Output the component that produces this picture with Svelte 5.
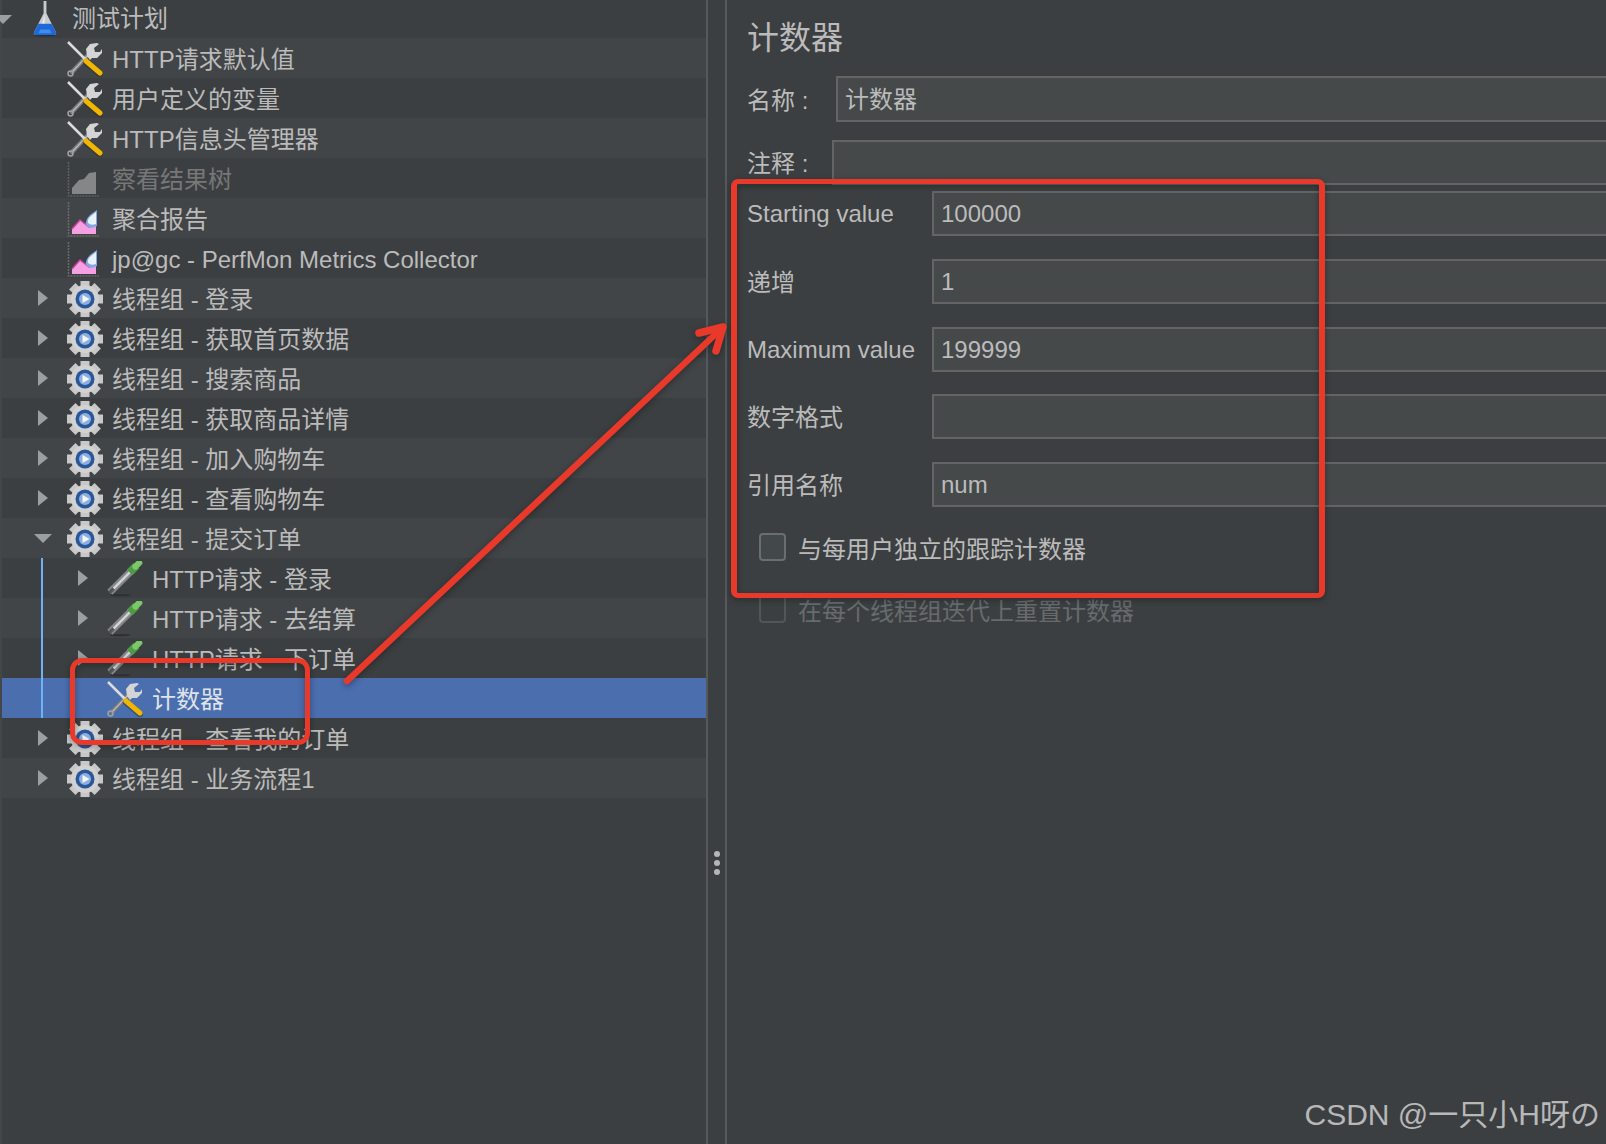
<script>
	const rows = [
		{ label: '测试计划', depth: 0, icon: 'flask', twisty: 'down' },
		{ label: 'HTTP请求默认值', depth: 1, icon: 'tools' },
		{ label: '用户定义的变量', depth: 1, icon: 'tools' },
		{ label: 'HTTP信息头管理器', depth: 1, icon: 'tools' },
		{ label: '察看结果树', depth: 1, icon: 'chart', disabled: true },
		{ label: '聚合报告', depth: 1, icon: 'chart' },
		{ label: 'jp@gc - PerfMon Metrics Collector', depth: 1, icon: 'chart' },
		{ label: '线程组 - 登录', depth: 1, icon: 'gear', twisty: 'right' },
		{ label: '线程组 - 获取首页数据', depth: 1, icon: 'gear', twisty: 'right' },
		{ label: '线程组 - 搜索商品', depth: 1, icon: 'gear', twisty: 'right' },
		{ label: '线程组 - 获取商品详情', depth: 1, icon: 'gear', twisty: 'right' },
		{ label: '线程组 - 加入购物车', depth: 1, icon: 'gear', twisty: 'right' },
		{ label: '线程组 - 查看购物车', depth: 1, icon: 'gear', twisty: 'right' },
		{ label: '线程组 - 提交订单', depth: 1, icon: 'gear', twisty: 'down' },
		{ label: 'HTTP请求 - 登录', depth: 2, icon: 'dropper', twisty: 'right', guide: true },
		{ label: 'HTTP请求 - 去结算', depth: 2, icon: 'dropper', twisty: 'right', guide: true },
		{ label: 'HTTP请求 - 下订单', depth: 2, icon: 'dropper', twisty: 'right', guide: true },
		{ label: '计数器', depth: 2, icon: 'tools', guide: true, selected: true },
		{ label: '线程组 - 查看我的订单', depth: 1, icon: 'gear', twisty: 'right' },
		{ label: '线程组 - 业务流程1', depth: 1, icon: 'gear', twisty: 'right' }
	];

	const fields = [
		{ label: 'Starting value', value: '100000' },
		{ label: '递增', value: '1', cjk: true },
		{ label: 'Maximum value', value: '199999' },
		{ label: '数字格式', value: '', cjk: true },
		{ label: '引用名称', value: 'num', cjk: true }
	];

	const teeth = [0, 45, 90, 135, 180, 225, 270, 315];
</script>

{#snippet icon(name, disabled)}
	{#if name === 'flask'}
		<svg class="icon" viewBox="0 0 36 38">
			<ellipse cx="18" cy="36" rx="12" ry="1.500" fill="#2c2e30" />
			<path d="M16.500 0h3v13l10 20q1 3-2 3H8.500q-3 0-2-3l10-20V5z" fill="#c9ccce" />
			<path d="M18 14l-4 14h3z" fill="#f1f1f1" />
			<path d="M11 24h14l4.500 9q1 3-2 3H8.500q-3 0-2-3z" fill="#1f68d8" />
			<path d="M13 30h10l2 4H11z" fill="#3f8bf0" />
		</svg>
	{:else if name === 'tools'}
		<svg class="icon" viewBox="0 0 36 36">
			<path d="M5 31L23 12" stroke="#77797b" stroke-width="4.500" stroke-linecap="round" />
			<path d="M5 31L23 12" stroke="#b8b8b8" stroke-width="1.500" />
			<circle cx="3.500" cy="32.500" r="2.500" fill="none" stroke="#a0a0a0" stroke-width="1.500" />
			<path d="M20 15l-1-7 4-5 7-1 2 1-5 4 1 4 5 0 2-3 0 4-5 5-5 0-2 2z" fill="#d4d4d4" />
			<path d="M1 1L20 20" stroke="#dcdcdc" stroke-width="2.500" />
			<path d="M19 21L33 33" stroke="#2e2e2e" stroke-width="6.500" stroke-linecap="round" opacity="0.5" />
			<path d="M19 20L33 32" stroke="#f1b600" stroke-width="5" stroke-linecap="round" />
		</svg>
	{:else if name === 'chart'}
		<svg class="icon" viewBox="0 0 36 36">
			<path d="M1.500 1V35H32" fill="none" stroke={disabled ? '#5e6062' : '#686a6c'} stroke-width="1.500" stroke-dasharray="2 1" />
			{#if disabled}
				<path d="M5 33v-6l7-8 5-1 5-6 7-1v22z" fill="#858687" />
			{:else}
				<path d="M5 33v-5l8-9 9 7 7-3v10z" fill="#f4a0e2" />
				<path d="M5 28l8-9 9 7 7-3" fill="none" stroke="#c9449a" stroke-width="1.500" />
				<path d="M30 9v16q-7 4-11-1-1-5 4-10z" fill="#7ea9e6" />
				<path d="M29 11v12q-5 2-8-1-1-4 3-7z" fill="#eaf2fc" />
			{/if}
		</svg>
	{:else if name === 'gear'}
		<svg class="icon" viewBox="0 0 36 36">
			{#each teeth as a}
				<rect x="13.500" y="0" width="9" height="8" fill="#c8c8c8" transform="rotate({a} 18 18)" />
			{/each}
			<circle cx="18" cy="18" r="14" fill="#d2d2d2" />
			<circle cx="18" cy="18" r="9.500" fill="#2a5798" />
			<circle cx="18" cy="18" r="6" fill="#8fb0de" />
			<path d="M15.500 14l7 4-7 4z" fill="#f4f6fa" />
		</svg>
	{:else}
		<svg class="icon" viewBox="0 0 36 38">
			<ellipse cx="13" cy="36" rx="11" ry="1.200" fill="#2e3032" />
			<path d="M2 33L24 11" stroke="#85878a" stroke-width="7.500" />
			<path d="M3 32L23 12" stroke="#d4d4d4" stroke-width="2.500" />
			<path d="M1.500 33.500L6 29" stroke="#555" stroke-width="3.500" />
			<path d="M23 12L30 5" stroke="#4f9a45" stroke-width="8.500" />
			<path d="M29 6L33 2" stroke="#7cc768" stroke-width="6.500" stroke-linecap="round" />
		</svg>
	{/if}
{/snippet}

<div class="page">
	<div class="tree">
		{#each rows as row, i}
			<div class="row" class:odd={i % 2 === 1} class:selected={row.selected} class:disabled={row.disabled}>
				{#if row.guide}<span class="guide"></span>{/if}
				<div class="row-inner" style="margin-left: {row.depth * 40 - 11}px">
					<span class="twisty">
						{#if row.twisty}<span class={row.twisty}></span>{/if}
					</span>
					{@render icon(row.icon, row.disabled)}
					<span class="label">{row.label}</span>
				</div>
			</div>
		{/each}
	</div>

	<div class="divider">
		<span></span>
		<span></span>
		<span></span>
	</div>

	<div class="pane">
		<h1>计数器</h1>
		<div class="field name">
			<label class="cjk" for="name">名称 :</label>
			<input id="name" readonly value="计数器" />
		</div>
		<div class="field comment">
			<label class="cjk" for="comment">注释 :</label>
			<input id="comment" readonly value="" />
		</div>
		<div class="counter">
			{#each fields as f, i}
				<div class="field">
					<label class:cjk={f.cjk} for="f{i}">{f.label}</label>
					<input id="f{i}" readonly value={f.value} />
				</div>
			{/each}
		</div>
		<div class="check">
			<span class="box"></span>
			<span>与每用户独立的跟踪计数器</span>
		</div>
		<div class="check off">
			<span class="box"></span>
			<span>在每个线程组迭代上重置计数器</span>
		</div>
	</div>

	<div class="mark small"></div>
	<div class="mark big"></div>
	<svg class="arrow" viewBox="0 0 1606 1144" width="1606" height="1144">
		<path d="M347 681L721 329" />
		<path class="head" d="M699 333L723 327L716 351" />
	</svg>
	<div class="watermark">CSDN @一只小H呀の</div>
</div>

<style>
	:global(body) {
		margin: 0;
		background: #3c3f41;
	}

	.page {
		position: relative;
		display: flex;
		width: 1606px;
		height: 1144px;
		overflow: hidden;
		background: #3c3f41;
		color: #bbbbbb;
		font-family: 'Liberation Sans', 'Noto Sans CJK SC', sans-serif;
		font-size: 24px;
	}

	.tree {
		width: 704px;
		flex-shrink: 0;
		padding-left: 2px;
		overflow: hidden;
		box-shadow: inset 2px 0 0 #44474a;
	}

	.row {
		position: relative;
		height: 40px;
		display: flex;
		align-items: center;
	}

	.row:first-child {
		height: 38px;
	}

	.row.odd {
		background: #424547;
	}

	.row.selected {
		background: #4b6eaf;
		color: #dfe3ea;
	}

	.row.disabled {
		color: #777777;
	}

	.guide {
		position: absolute;
		left: 39px;
		top: 0;
		bottom: 0;
		width: 2px;
		background: #6db2f2;
	}

	.row-inner {
		display: flex;
		align-items: center;
		white-space: nowrap;
	}

	.twisty {
		width: 24px;
		margin-right: 12px;
		display: flex;
		justify-content: center;
		flex-shrink: 0;
	}

	.right {
		width: 0;
		height: 0;
		border-left: 10px solid #9c9fa1;
		border-top: 8px solid transparent;
		border-bottom: 8px solid transparent;
	}

	.down {
		width: 0;
		height: 0;
		border-top: 9px solid #9c9fa1;
		border-left: 9px solid transparent;
		border-right: 9px solid transparent;
	}

	.icon {
		width: 36px;
		height: 36px;
		flex-shrink: 0;
		margin: 2px 9px 0 0;
		filter: blur(0.6px);
	}

	.row:first-child .icon {
		margin-top: 0;
	}

	.label {
		line-height: 40px;
		padding-top: 3px;
	}

	.row:first-child .label {
		padding-top: 0;
	}

	.divider {
		width: 17px;
		flex-shrink: 0;
		border-left: 2px solid #56595b;
		border-right: 2px solid #56595b;
		display: flex;
		flex-direction: column;
		align-items: center;
		gap: 3px;
		padding-top: 851px;
	}

	.divider span {
		width: 6px;
		height: 6px;
		border-radius: 50%;
		background: #b4b6b8;
	}

	.pane {
		flex: 1;
		min-width: 0;
		padding: 18px 0 0 20px;
		overflow: hidden;
	}

	h1 {
		margin: 0 0 18px;
		font-size: 32px;
		font-weight: normal;
		line-height: 40px;
	}

	.field {
		display: flex;
		align-items: center;
		height: 45px;
	}

	.field label {
		width: 185px;
		flex-shrink: 0;
		white-space: nowrap;
		padding-top: 1px;
	}

	.field label.cjk {
		padding: 0 0 2px;
	}

	.field input {
		flex: 1;
		min-width: 0;
		height: 100%;
		margin-right: -6px;
		box-sizing: border-box;
		border: 2px solid #646464;
		background: #45494a;
		color: #bbbbbb;
		font: inherit;
		padding: 1px 7px 0;
		outline: none;
	}

	.name {
		height: 46px;
	}

	.name input {
		padding: 0 7px 4px;
	}

	.name label {
		width: 89px;
	}

	.comment {
		margin-top: 18px;
	}

	.comment label {
		width: 85px;
	}

	.counter {
		margin-top: 6px;
		display: flex;
		flex-direction: column;
		gap: 22.800px;
	}

	.check {
		display: flex;
		align-items: center;
		gap: 12px;
		margin: 26px 0 0 12px;
		height: 28px;
	}

	.check.off {
		margin-top: 34px;
		color: #686b6d;
	}

	.box {
		width: 27px;
		height: 28px;
		box-sizing: border-box;
		border: 2px solid #6b6e70;
		border-radius: 4px;
		background: #43494a;
	}

	.off .box {
		border-color: #535658;
		background: transparent;
	}

	.mark {
		position: absolute;
		box-sizing: border-box;
		border: 5px solid #e8392a;
		filter: drop-shadow(0 2px 3px rgba(0, 0, 0, 0.35));
	}

	.small {
		left: 70px;
		top: 658px;
		width: 240px;
		height: 87px;
		border-radius: 12px;
	}

	.big {
		left: 731px;
		top: 179px;
		width: 594px;
		height: 419px;
		border-width: 5px 6px;
		border-radius: 7px;
	}

	.arrow {
		position: absolute;
		left: 0;
		top: 0;
		fill: none;
		stroke: #e8392a;
		stroke-width: 6.500;
		stroke-linecap: round;
		stroke-linejoin: round;
		filter: drop-shadow(0 2px 3px rgba(0, 0, 0, 0.35));
	}

	.arrow .head {
		stroke-width: 7.500;
	}

	.watermark {
		position: absolute;
		right: 6px;
		bottom: 11px;
		font-size: 30px;
		line-height: 36px;
		color: #b8b8b8;
		white-space: nowrap;
	}
</style>
